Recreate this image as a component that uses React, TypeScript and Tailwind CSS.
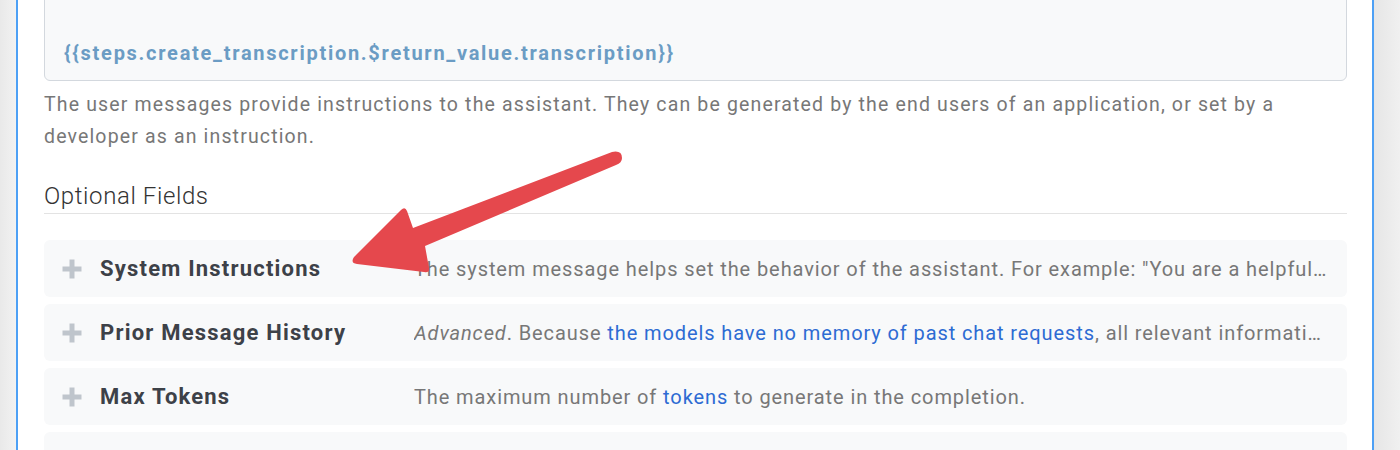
import React from 'react';

type Field = {
  title: string;
  desc: React.ReactNode;
};

const FIELDS: Field[] = [
  {
    title: 'System Instructions',
    desc: 'The system message helps set the behavior of the assistant. For example: "You are a helpful assistant." See the OpenAI docs for more.',
  },
  {
    title: 'Prior Message History',
    desc: (
      <>
        <em>Advanced</em>. Because{' '}
        <span className="text-[#2d6bd3]">the models have no memory of past chat requests</span>, all relevant information
        must be supplied via the conversation.
      </>
    ),
  },
  {
    title: 'Max Tokens',
    desc: (
      <>
        The maximum number of <span className="text-[#2d6bd3]">tokens</span> to generate in the completion.
      </>
    ),
  },
  { title: 'Temperature', desc: '' },
];

function PlusIcon() {
  return (
    <svg width="20" height="20" viewBox="0 0 20 20" className="shrink-0">
      <path d="M10 0.5v19M0.5 10h19" stroke="#bfc5cc" strokeWidth="5" />
    </svg>
  );
}

// 红色标注箭头, 覆盖在内容之上
function Arrow() {
  return (
    <svg
      className="pointer-events-none absolute left-0 top-0"
      width="1400"
      height="450"
      viewBox="0 0 1400 450"
    >
      <path
        d="M612 152 Q622 150 622 158 Q622 163 616 165 L425 246 L429 268 Q430 273 424 272 L357 264 Q350 263 354 257 L401 210 Q405 206 407 211 L413 228 Z"
        fill="#e5484d"
      />
    </svg>
  );
}

export default function App() {
  return (
    <div
      className="relative flex h-[450px] w-full overflow-hidden bg-[#ececec]"
      style={{ fontFamily: 'Roboto, "Liberation Sans", sans-serif' }}
    >
      <div className="w-4 shrink-0 bg-gradient-to-r from-[#e9e9e9] to-[#f2f2f2]" />
      <div className="min-w-0 flex-1 border-x-2 border-[#4da0f5] bg-white pl-[26px] pr-[25px]">
        {/* textarea (上方被裁掉) */}
        <div className="-mt-[12px] h-[93px] rounded-md border border-[#d3d8de] bg-[#f8f9fa] px-[19px] pt-[48px]">
          <div className="text-[20px] font-bold leading-[32px] tracking-[1.72px] text-[#6b9cc4]">
            {'{{steps.create_transcription.$return_value.transcription}}'}
          </div>
        </div>
        <p className="mt-[8px] text-[19.5px] leading-[32px] tracking-[1.15px] text-[#777]">
          The user messages provide instructions to the assistant. They can be generated by the end users of an
          application, or set by a developer as an instruction.
        </p>

        <h3 className="mt-[27px] border-b border-[#e3e3e3] pb-[1px] text-[24px] font-light leading-[32px] tracking-[0.6px] text-[#333]">
          Optional Fields
        </h3>

        <div className="mt-[26px] flex flex-col gap-[7px]">
          {FIELDS.map((f) => (
            <div key={f.title} className="flex h-[57px] items-center rounded-md bg-[#f8f9fa] pl-[18px] pr-[20px]">
              <PlusIcon />
              <div className="ml-[18px] w-[314px] shrink-0 text-[22px] font-bold tracking-[1.2px] text-[#3d4148]">
                {f.title}
              </div>
              <div className="min-w-0 flex-1 truncate text-[20px] tracking-[0.9px] text-[#777]">{f.desc}</div>
            </div>
          ))}
        </div>
      </div>
      <div className="w-[26px] shrink-0 bg-gradient-to-r from-[#e6e6e6] to-[#f0f0f0]" />
      <Arrow />
    </div>
  );
}
